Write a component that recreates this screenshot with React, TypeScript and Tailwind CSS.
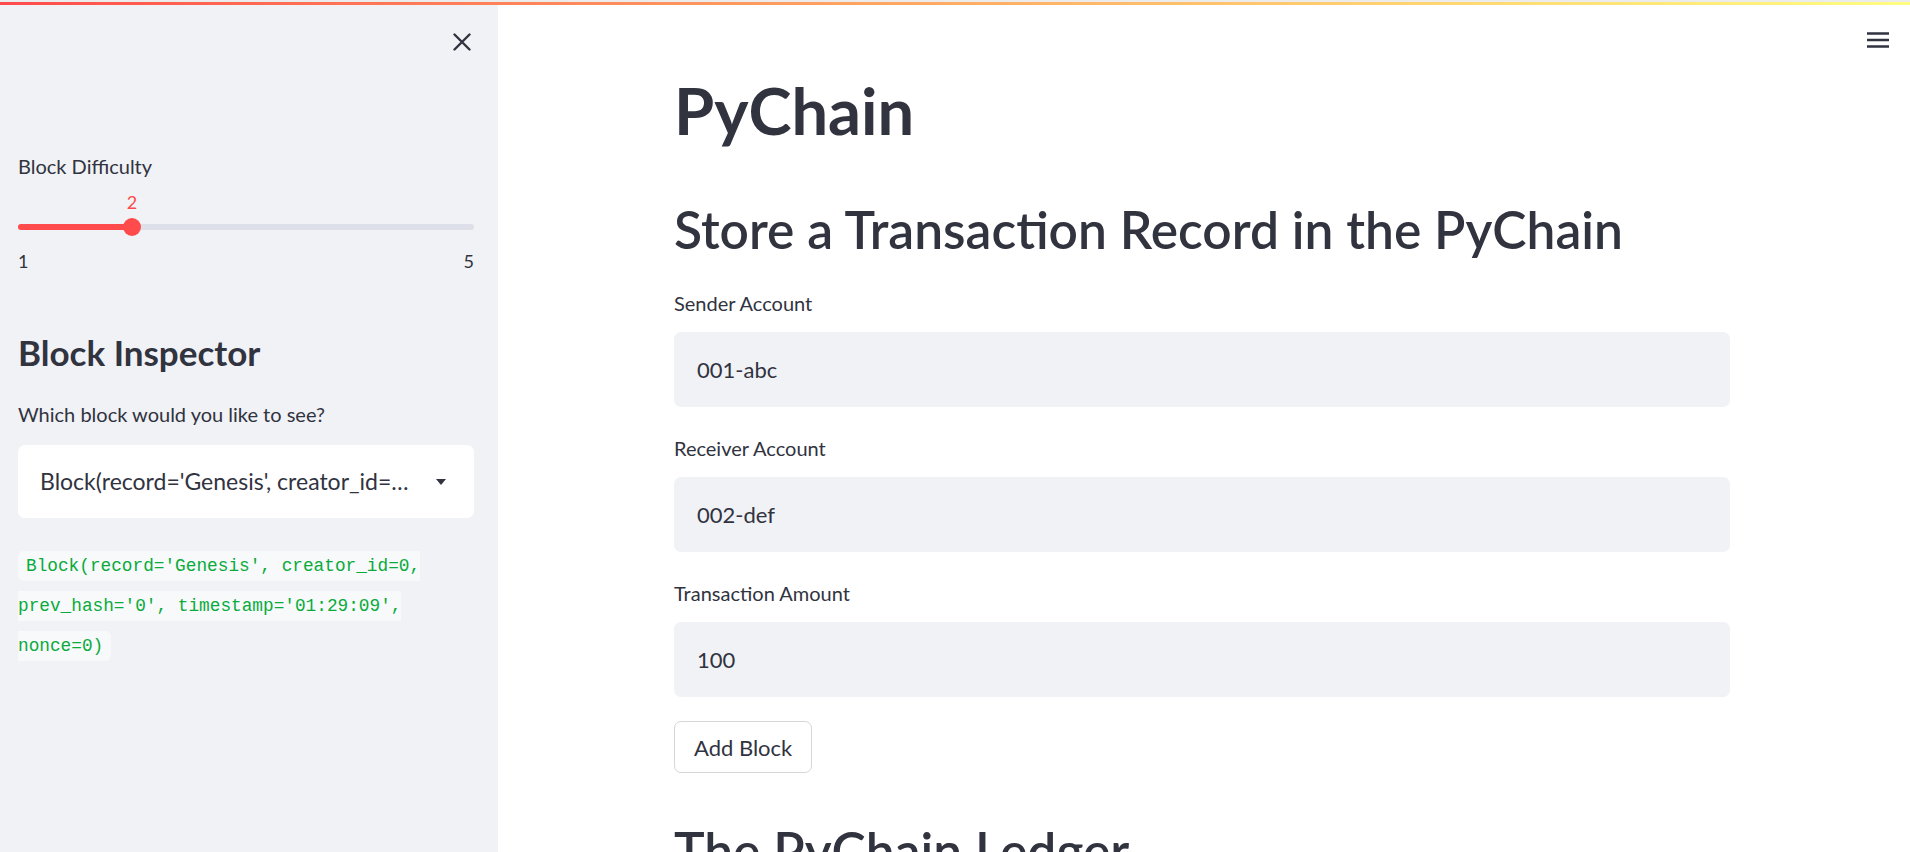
import React from "react";

const SANS = "font-['Lato','Noto_Sans',sans-serif]";
const MONO = "font-['Liberation_Mono','DejaVu_Sans_Mono',monospace]";

function CloseIcon() {
  return (
    <svg width="18" height="18" viewBox="0 0 18 18" fill="none">
      <path d="M1.5 1.5L16.5 16.5M16.5 1.5L1.5 16.5" stroke="#31333f" strokeWidth="2.4" strokeLinecap="round" />
    </svg>
  );
}

function MenuIcon() {
  return (
    <svg width="22" height="16" viewBox="0 0 22 16" fill="none">
      <path d="M0 1.5H22M0 8H22M0 14.5H22" stroke="#31333f" strokeWidth="2.5" />
    </svg>
  );
}

function Slider({ value, min, max }: { value: number; min: number; max: number }) {
  const pct = ((value - min) / (max - min)) * 100;
  return (
    <div className="mt-[13px]">
      {/* value */}
      <div className="relative h-[22px]">
        <span
          className="absolute top-0 -translate-x-1/2 text-[18px] leading-[22px] text-[#ff4b4b]"
          style={{ left: `${pct}%` }}
        >
          {value}
        </span>
      </div>
      {/* track */}
      <div className="relative mt-[5px] flex h-[18px] items-center">
        <div className="h-[6px] w-full rounded-full bg-[#dde0e8]">
          <div className="h-full rounded-full bg-[#ff4b4b]" style={{ width: `${pct}%` }} />
        </div>
        <div
          className="absolute top-0 h-[18px] w-[18px] -translate-x-1/2 rounded-full bg-[#ff4b4b]"
          style={{ left: `${pct}%` }}
        />
      </div>
      {/* min / max */}
      <div className="mt-[14px] flex justify-between text-[18px] leading-[22px] text-[#31333f]">
        <span>{min}</span>
        <span>{max}</span>
      </div>
    </div>
  );
}

function Field({ label, value, first }: { label: string; value: string; first?: boolean }) {
  return (
    <div className={first ? "mt-[31px]" : "mt-[29px]"}>
      <div className="text-[20px] leading-[25px] text-[#31333f]">{label}</div>
      <div className="mt-[16px] flex h-[75px] items-center rounded-[7px] bg-[#f0f2f6] pl-[23px] text-[22px] text-[#31333f]">
        {value}
      </div>
    </div>
  );
}

export default function App() {
  return (
    <div className={`relative flex h-[852px] w-full overflow-hidden bg-white ${SANS}`}>
      {/* top decoration */}
      <div className="absolute left-0 right-0 top-0 z-10 h-[5px] border-t-2 border-[#ececec] bg-gradient-to-r from-[#ff4b4b] to-[#fffd80]" />

      {/* Sidebar */}
      <aside className="h-full w-[498px] shrink-0 bg-[#f0f2f6] pl-[18px] pr-[24px]">
        <div className="flex justify-end pt-[33px] pr-[3px]">
          <CloseIcon />
        </div>

        <div className="mt-[103px] text-[20px] leading-[24px] text-[#31333f]">Block Difficulty</div>
        <Slider value={2} min={1} max={5} />

        <h2 className="mt-[59px] text-[35px] font-bold leading-[42px] text-[#31333f]">Block Inspector</h2>
        <div className="mt-[29px] text-[20px] leading-[25px] text-[#31333f]">Which block would you like to see?</div>

        {/* selectbox */}
        <div className="mt-[18px] flex h-[73px] items-center rounded-[7px] bg-white pl-[22px] pr-[28px]">
          <span className="min-w-0 flex-1 truncate pr-[22px] text-[23px] text-[#31333f]">
            Block(record='Genesis', creator_id=0, prev_hash='0', timestamp='01:29:09', nonce=0)
          </span>
          <svg width="10" height="6" viewBox="0 0 10 6">
            <path d="M0 0H10L5 6Z" fill="#31333f" />
          </svg>
        </div>

        {/* code output */}
        <div className="mt-[27px] text-[17.75px] leading-[38px]">
          <code className={`${MONO} rounded-[6px] bg-[#f8f9fb] px-[8px] py-[5px] text-[#09ab3b]`}>
            Block(record='Genesis', creator_id=0, prev_hash='0', timestamp='01:29:09', nonce=0)
          </code>
        </div>
      </aside>

      {/* Main */}
      <main className="relative h-full flex-1">
        <button className="absolute right-[21px] top-[32px]">
          <MenuIcon />
        </button>

        <div className="ml-[176px] w-[1056px] pt-[70px]">
          <h1 className="text-[65px] font-bold leading-[80px] text-[#31333f]">PyChain</h1>
          <h2 className="mt-[48px] text-[51.5px] font-semibold leading-[62px] text-[#31333f]">
            Store a Transaction Record in the PyChain
          </h2>

          <Field first label="Sender Account" value="001-abc" />
          <Field label="Receiver Account" value="002-def" />
          <Field label="Transaction Amount" value="100" />

          <button className="mt-[24px] h-[52px] rounded-[7px] border border-[#d5d6d9] bg-white px-[19px] text-[22px] text-[#31333f]">
            Add Block
          </button>

          <h2 className="mt-[46px] text-[51.5px] font-semibold leading-[62px] text-[#31333f]">The PyChain Ledger</h2>
        </div>
      </main>
    </div>
  );
}
